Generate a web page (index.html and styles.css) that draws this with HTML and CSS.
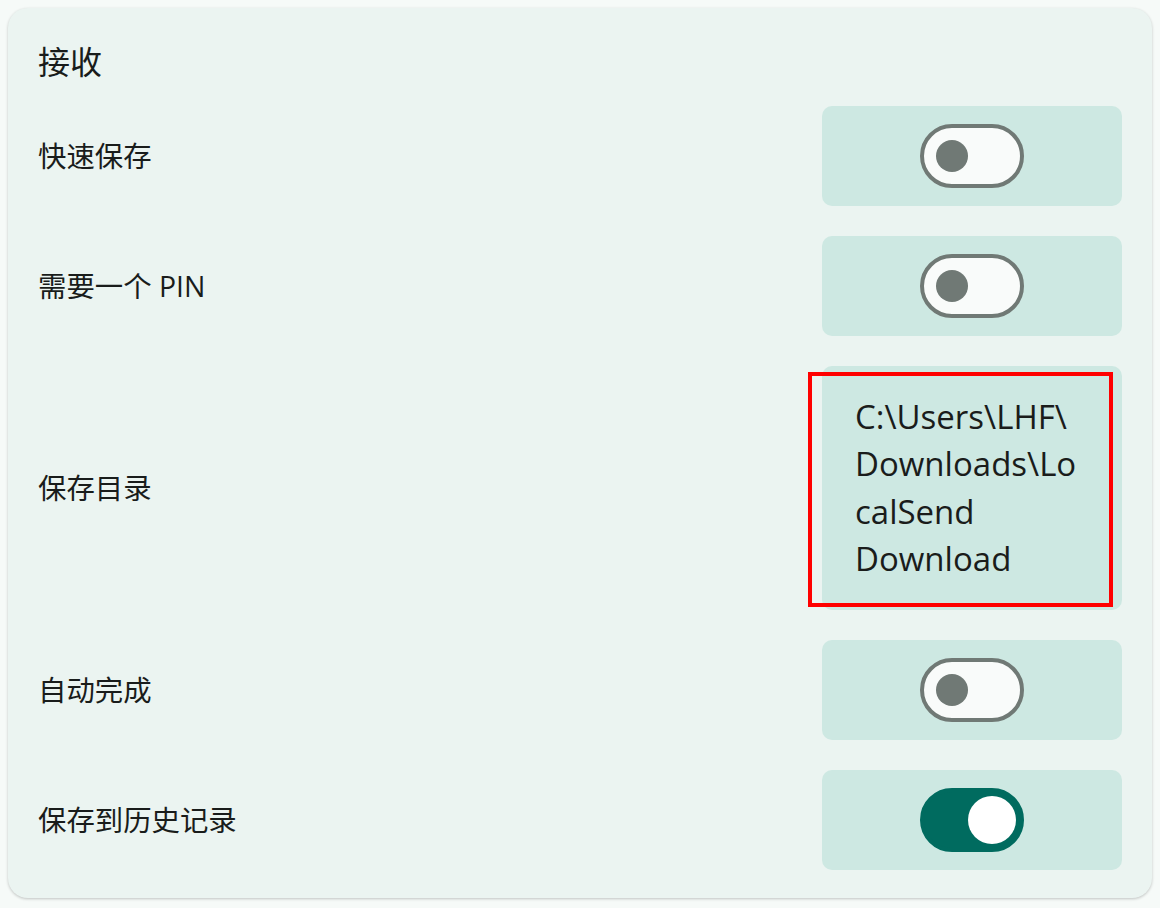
FILE: index.html
```html
<!DOCTYPE html>
<html lang="zh">
<head>
<meta charset="utf-8">
<title>接收</title>
<link rel="stylesheet" href="styles.css">
</head>
<body>
<section class="card">
  <h2 class="card-title">接收</h2>
  <div class="rows">
    <div class="row">
      <span class="label">快速保存</span>
      <div class="control">
        <span class="switch"><span class="knob"></span></span>
      </div>
    </div>
    <div class="row">
      <span class="label">需要一个 PIN</span>
      <div class="control">
        <span class="switch"><span class="knob"></span></span>
      </div>
    </div>
    <div class="row">
      <span class="label">保存目录</span>
      <div class="control control-path">
        <span class="path">C:\Users\LHF\<br>Downloads\Lo<br>calSend<br>Download</span>
        <span class="highlight"></span>
      </div>
    </div>
    <div class="row">
      <span class="label">自动完成</span>
      <div class="control">
        <span class="switch"><span class="knob"></span></span>
      </div>
    </div>
    <div class="row">
      <span class="label">保存到历史记录</span>
      <div class="control">
        <span class="switch switch-on"><span class="knob"></span></span>
      </div>
    </div>
  </div>
</section>
</body>
</html>
```

FILE: styles.css
```css
html, body {
  margin: 0;
  padding: 0;
  background: #f6faf8;
}

body {
  padding: 8px;
  font-family: "Open Sans", "Noto Sans CJK SC", sans-serif;
  color: #191c1b;
}

.card {
  background: #ebf4f1;
  border-radius: 20px;
  box-shadow: 0 1px 3px rgba(0, 0, 0, 0.22);
  padding: 30px 30px 28px 30px;
  height: 890px;
  box-sizing: border-box;
}

.card-title {
  margin: 0 0 20px 0;
  font-size: 32px;
  font-weight: 400;
  line-height: 48px;
  height: 48px;
}

.rows {
  display: flex;
  flex-direction: column;
  gap: 30px;
}

.row {
  display: flex;
  align-items: center;
  justify-content: space-between;
}

.label {
  font-size: 28.4px;
  line-height: 40px;
}

.control {
  position: relative;
  width: 300px;
  height: 100px;
  background: #cde8e2;
  border-radius: 10px;
  display: flex;
  align-items: center;
  justify-content: center;
}

.switch {
  width: 104px;
  height: 64px;
  box-sizing: border-box;
  border: 4px solid #707975;
  background: #f9fbfa;
  border-radius: 32px;
  display: flex;
  align-items: center;
  padding-left: 12px;
}

.switch .knob {
  width: 32px;
  height: 32px;
  border-radius: 50%;
  background: #707975;
}

.switch-on {
  background: #006b5f;
  border-color: #006b5f;
  justify-content: flex-end;
  padding-left: 0;
  padding-right: 4px;
}

.switch-on .knob {
  width: 48px;
  height: 48px;
  background: #ffffff;
}

.control-path {
  height: 244px;
  box-sizing: border-box;
  padding: 26.5px 32px 27.5px 33px;
  justify-content: flex-start;
  align-items: flex-start;
}

.path {
  font-size: 33px;
  line-height: 47.5px;
  color: #1a1c1b;
}

.highlight {
  position: absolute;
  left: -14px;
  top: 6px;
  width: 305px;
  height: 235px;
  box-sizing: border-box;
  border: 4px solid #ff0000;
  pointer-events: none;
}
```
